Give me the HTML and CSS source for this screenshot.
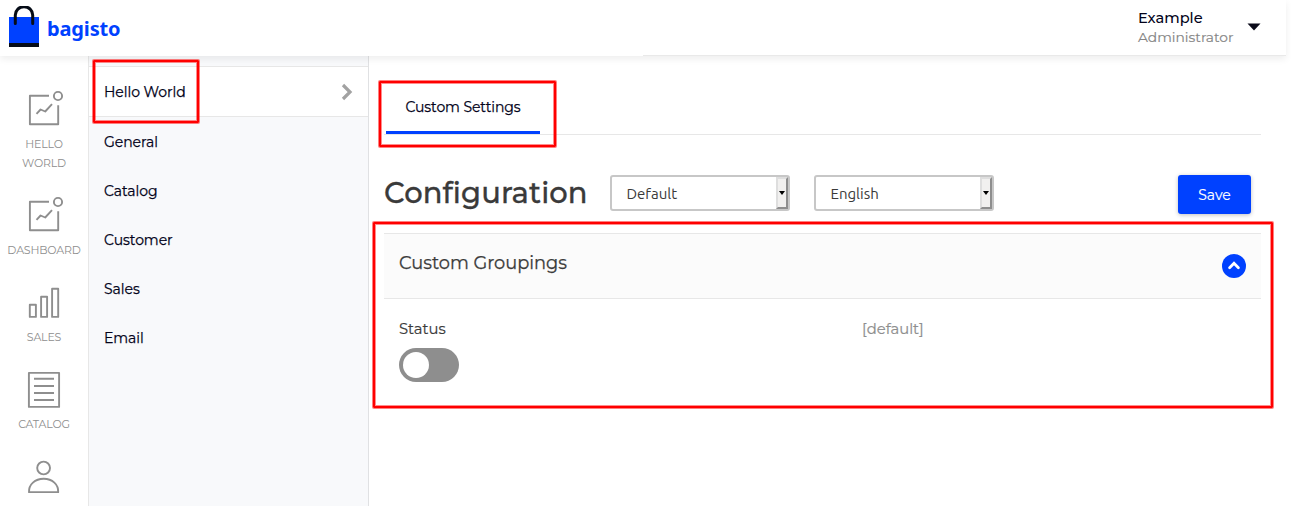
FILE: index.html
```html
<!DOCTYPE html>
<html lang="en">
<head>
<meta charset="utf-8">
<title>Configuration</title>
<link rel="stylesheet" href="styles.css">
</head>
<body>
<header class="topbar">
  <div class="brand">
    <svg class="brand-icon" width="32" height="42" viewBox="0 0 32 42"><path fill="#0041ff" d="M1 11h30v26H1z"/><path fill="#060c17" d="M1 37h30v4H1z"/><path d="M7.3 17.5V9a8.6 8.2 0 0 1 17.4 0v8.5" fill="none" stroke="#060c17" stroke-width="3" stroke-linecap="round"/></svg>
    <span class="brand-name">bagisto</span>
  </div>
  <div class="profile">
    <div class="profile-text"><span class="name">Example</span><span class="role">Administrator</span></div>
    <svg width="14" height="8" viewBox="0 0 14 8"><path d="M.5.5h13L7 7.5z" fill="#0a0a1a"/></svg>
  </div>
</header>
<div class="layout">
  <nav class="menu">
    <a class="menu-item"><svg width="48" height="48"><path d="M29 9.8H9.9v28.4h28.3V19.3M16.5 27.8l4.1-4.3 4.6 2L32 18.2"/><circle cx="38" cy="10" r="4.1"/></svg><span class="l-hello">HELLO WORLD</span></a>
    <a class="menu-item"><svg width="48" height="48"><path d="M29 9.8H9.9v28.4h28.3V19.3M16.5 27.8l4.1-4.3 4.6 2L32 18.2"/><circle cx="38" cy="10" r="4.1"/></svg><span>DASHBOARD</span></a>
    <a class="menu-item"><svg width="48" height="48"><path d="M9.8 25.8h6.1v12.1H9.8zM21.1 17.8h6v20.1h-6zM32.1 9.8h6.1v28.1h-6.1z"/></svg><span>SALES</span></a>
    <a class="menu-item"><svg width="48" height="48"><path d="M8.9 6.9h30.2v34H8.9zM14 12.8h20M14 20h20M14 27h20M14 34h20"/></svg><span>CATALOG</span></a>
    <a class="menu-item"><svg width="48" height="48"><circle cx="23.6" cy="15" r="6.4"/><path d="M9 39.1C8.6 31.5 15 25.8 23.7 25.8S38.6 31.5 38.2 39.1z"/></svg></a>
  </nav>
  <aside class="subnav">
    <a class="sub active"><span>Hello World</span><svg width="12" height="18" viewBox="0 0 12 18"><path d="M2 2l7 7-7 7" fill="none" stroke="#a2a2a2" stroke-width="3.2"/></svg></a>
    <a class="sub">General</a>
    <a class="sub">Catalog</a>
    <a class="sub">Customer</a>
    <a class="sub">Sales</a>
    <a class="sub">Email</a>
  </aside>
  <main class="content">
    <div class="tabs"><a class="tab">Custom Settings</a></div>
    <div class="page-head">
      <h1>Configuration</h1>
      <div class="select"><span>Default</span><i class="drop"></i></div>
      <div class="select"><span>English</span><i class="drop"></i></div>
      <button class="save">Save</button>
    </div>
    <section class="accordion">
      <div class="accordion-head"><span>Custom Groupings</span>
        <svg width="24" height="24" viewBox="0 0 24 24"><circle cx="12" cy="12" r="12" fill="#0041ff"/><path d="M7.6 13.7L12 9.3l4.4 4.4" fill="none" stroke="#fff" stroke-width="2.8" stroke-linecap="round"/></svg>
      </div>
      <div class="accordion-body">
        <div class="field"><label>Status</label><div class="switch"><i></i></div></div>
        <span class="scope">[default]</span>
      </div>
    </section>
  </main>
</div>
<div class="mark mark-nav"></div>
<div class="mark mark-tab"></div>
<div class="mark mark-group"></div>
</body>
</html>
```
FILE: styles.css
```css
* { box-sizing: border-box; }
body { margin: 0; height: 506px; overflow: hidden; background: #fff; color: #03031a; font-family: Montserrat, Inter, sans-serif; font-size: 14px; font-weight: 400; }
.topbar { position: relative; z-index: 2; width: 1286px; height: 56px; display: flex; justify-content: space-between; background: linear-gradient(#e9e9e9, #e9e9e9) 643px 55px / 643px 1px no-repeat #fff; box-shadow: 0 3px 7px rgba(0,0,0,.07); }
.brand { display: flex; align-items: flex-start; padding: 6px 0 0 8px; }
.brand-name { margin: 9px 0 0 7px; font: 700 20px/28px "Noto Sans", sans-serif; color: #0041ff; letter-spacing: -.15px; }
.profile { display: flex; align-items: center; gap: 13px; padding: 0 25px 2px 0; }
.profile-text { display: flex; flex-direction: column; width: 96px; padding-top: 2px; line-height: 19px; white-space: nowrap; }
.name { font-size: 14.6px; font-weight: 500; }
.role { font-size: 13.8px; color: #858585; -webkit-text-stroke: .15px; }
.layout { display: flex; height: 450px; }
.menu { width: 88px; padding-top: 30px; display: flex; flex-direction: column; gap: 20px; }
.menu-item { display: flex; flex-direction: column; align-items: center; flex: none; font-size: 11px; line-height: 19px; color: #8e8e8e; text-align: center; letter-spacing: -.18px; }
.menu-item svg { display: block; fill: none; stroke: #8e8e8e; stroke-width: 1.9; stroke-linejoin: round; }
.menu-item span { padding-top: 1px; margin-bottom: -1px; }
.l-hello { width: 60px; }
.subnav { width: 281px; padding-top: 10px; background: #f8f9fb; border-left: 1px solid #e7e7e7; border-right: 1px solid #e0e1e3; }
.sub { display: flex; align-items: center; justify-content: space-between; height: 49px; padding: 0 15px; -webkit-text-stroke: .25px; letter-spacing: -.05px; }
.sub.active { height: 51px; background: #fff; border-top: 1px solid #e7e7e7; border-bottom: 1px solid #e7e7e7; }
.content { width: 922px; padding: 24px 30px 0 15px; }
.tabs { height: 55px; padding-left: 2px; border-bottom: 1px solid #e7e7e7; }
.tab { display: flex; width: 154px; height: 54px; justify-content: center; align-items: center; padding-top: 2px; border-bottom: 3px solid #0041ff; -webkit-text-stroke: .25px; letter-spacing: -.1px; }
.page-head { display: flex; height: 98px; padding: 40px 10px 0 0; align-items: flex-start; }
h1 { margin: 0; width: 226px; font-size: 29px; line-height: 36px; font-weight: 500; color: #3a3a3a; letter-spacing: .1px; -webkit-text-stroke: .3px; }
.select { display: flex; justify-content: space-between; width: 180px; height: 36px; margin-right: 24px; padding-left: 14.5px; border: 2px solid #c7c7c7; border-radius: 3px; font: 15px/34px Ubuntu, "Noto Sans", sans-serif; color: #3a3a3a; }
.drop { width: 12px; height: 32px; background: #f1f0ef; border: 2px solid #dedede; border-right-color: #8e8e8e; border-bottom-color: #8e8e8e; display: flex; align-items: center; justify-content: center; }
.drop::before { content: ""; border: 3px solid transparent; border-top: 4px solid #000; border-bottom: 0; }
.save { margin-left: auto; width: 73px; height: 39px; padding: 0; border: 0; border-radius: 3px; background: #0041ff; color: #fff; font: 14px Montserrat, Inter, sans-serif; -webkit-text-stroke: .15px; box-shadow: 0 1px 4px rgba(0,0,0,.25); }
.accordion-head { display: flex; justify-content: space-between; height: 66px; padding: 20px 15px 0; background: #fbfbfb; border-top: 1px solid #e7e7e7; border-bottom: 1px solid #e7e7e7; font-size: 17.8px; line-height: 18px; color: #3a3a3a; }
.accordion-head span { -webkit-text-stroke: .25px; }
.accordion-body { display: flex; padding: 20px 15px; font-size: 14.8px; line-height: 20px; color: #3a3a3a; -webkit-text-stroke: .2px; }
.field { width: 463px; }
.field label { display: block; }
.switch { width: 60px; height: 34px; margin-top: 9px; padding: 4px; border-radius: 17px; background: #8e8e8e; }
.switch i { display: block; width: 26px; height: 26px; border-radius: 50%; background: #fff; }
.scope { color: #8e8e8e; }
.mark { position: absolute; z-index: 5; border: 2px solid #f00; border-radius: 1px; box-shadow: 0 0 0 1px rgba(255,0,0,.5), inset 0 0 0 1px rgba(255,0,0,.45); }
.mark-nav { left: 93px; top: 60px; width: 106px; height: 63px; }
.mark-tab { left: 379px; top: 81px; width: 177px; height: 66px; }
.mark-group { left: 373px; top: 222px; width: 900px; height: 186px; }
```
